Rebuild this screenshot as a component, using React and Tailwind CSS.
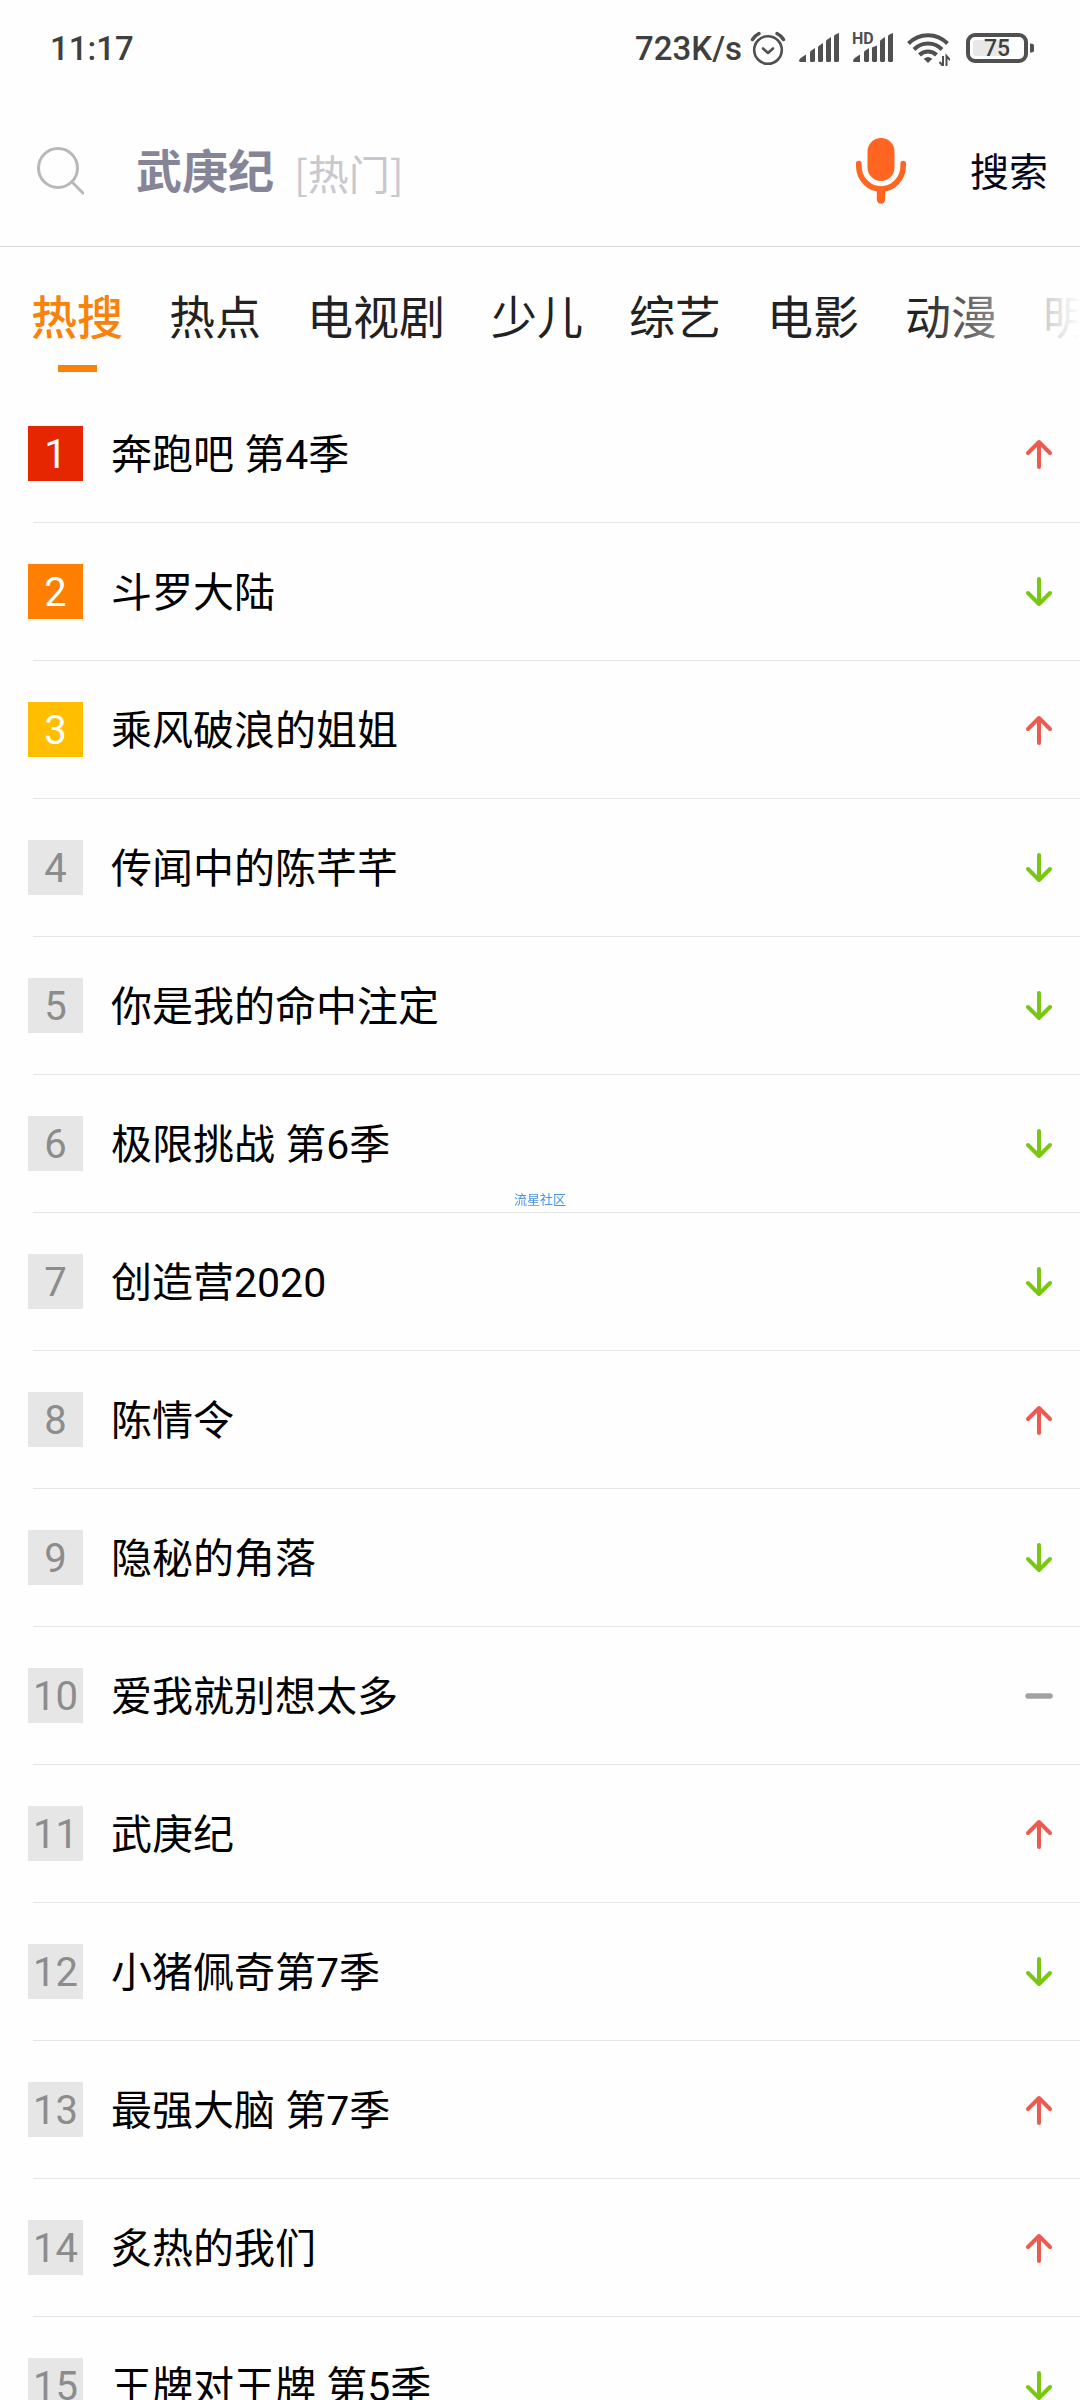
import { useState } from 'react';
import clsx from 'clsx';

const TABS = ['热搜', '热点', '电视剧', '少儿', '综艺', '电影', '动漫', '明星'];

const HOT_LIST = [
  { title: '奔跑吧 第4季', trend: 'up' },
  { title: '斗罗大陆', trend: 'down' },
  { title: '乘风破浪的姐姐', trend: 'up' },
  { title: '传闻中的陈芊芊', trend: 'down' },
  { title: '你是我的命中注定', trend: 'down' },
  { title: '极限挑战 第6季', trend: 'down' },
  { title: '创造营2020', trend: 'down' },
  { title: '陈情令', trend: 'up' },
  { title: '隐秘的角落', trend: 'down' },
  { title: '爱我就别想太多', trend: 'flat' },
  { title: '武庚纪', trend: 'up' },
  { title: '小猪佩奇第7季', trend: 'down' },
  { title: '最强大脑 第7季', trend: 'up' },
  { title: '炙热的我们', trend: 'up' },
  { title: '王牌对王牌 第5季', trend: 'down' },
];

const RANK_COLORS = ['bg-[#e52600] text-white', 'bg-[#ff8000] text-white', 'bg-[#ffbf00] text-white'];

const AlarmIcon = () => (
  <svg className="w-9 h-9" viewBox="0 0 36 36" fill="none" stroke="#505050" strokeLinecap="round" strokeLinejoin="round">
    <circle cx="18" cy="20" r="13.8" strokeWidth="2.6" />
    <path d="M13 18.5l5 4.5 5-4.5" strokeWidth="2.6" />
    <path d="M2.5 9.5Q5 5.500 9 3.500M27 3.500q4 2 6.500 6" strokeWidth="3.4" />
  </svg>
);

const SignalIcon = ({ hd }) => (
  <svg className="w-[42px] h-9 overflow-visible" viewBox="0 0 42 36" fill="#505050">
    <path d="M1 30.500q0-2 7-6V32H2.500Q1 32 1 30.500z" />
    <path d="M12 22.500q0-1 1-1.700l4-2.800v12.500q0 1.500-1.500 1.500h-2Q12 32 12 30.500z" />
    <path d={hd ? 'M20 17.500l5-2v15q0 1.500-1.500 1.500h-2Q20 32 20 30.500z' : 'M20 17.500q0-1 1-1.700l4-2.800v17.500q0 1.500-1.500 1.500h-2Q20 32 20 30.500z'} />
    <path d="M28 11.500q0-1 1-1.700l4-2.800v23.500q0 1.500-1.500 1.500h-2Q28 32 28 30.500z" />
    <path d="M36 6.500q0-1 1-1.700L41 3v27.500q0 1.500-1.500 1.500h-2Q36 32 36 30.500z" />
    {hd && (
      <text x="0" y="14" fontSize="16" fontWeight="700" fontFamily="Roboto, sans-serif">HD</text>
    )}
  </svg>
);

const WifiIcon = () => (
  <svg className="w-11 h-9" viewBox="0 0 44 36" fill="none" stroke="#505050">
    <path d="M2.500 13.500a27 27 0 0 1 39 0" strokeWidth="4" />
    <path d="M8 19.500a19.500 19.500 0 0 1 28 0" strokeWidth="4" />
    <path d="M13.500 25a12 12 0 0 1 17 0" strokeWidth="4" />
    <path d="M22 33l-4.300-4.300q4.300-3.400 8.600 0z" fill="#505050" stroke="none" />
    <path d="M37 26v10l-3.500-4M40.500 36V26l3.500 4" strokeWidth="2" />
  </svg>
);

const BatteryIcon = ({ level }) => (
  <svg className="w-[70px] h-9" viewBox="0 0 70 36">
    <rect x="2" y="5" width="58" height="26" rx="7" fill="none" stroke="#505050" strokeWidth="4" />
    <rect x="7" y="10" width="36" height="16" rx="3" fill="#e8e8e8" />
    <path d="M64 13.500q4 0 4 2v5q0 2-4 2z" fill="#505050" />
    <text x="31" y="26" fontSize="23" fontWeight="500" textAnchor="middle" fill="#3f3f3f" fontFamily="Roboto, sans-serif">
      {level}
    </text>
  </svg>
);

const SearchIcon = () => (
  <svg className="w-12 h-12" viewBox="0 0 48 48" fill="none" stroke="#b8b8b8" strokeWidth="3">
    <circle cx="22" cy="21" r="19.500" />
    <path d="M36 35l12 12" />
  </svg>
);

const MicIcon = () => (
  <svg className="w-[50px] h-[68px]" viewBox="0 0 50 68" fill="none" stroke="#ff6421" strokeLinecap="round">
    <rect x="11.500" y="1" width="27" height="43" rx="13.500" fill="#ff6421" stroke="none" />
    <path d="M2.800 26.500v2.500a22.200 23 0 0 0 44.400 0v-2.500" strokeWidth="5.600" />
    <path d="M25 54v8.500" strokeWidth="8.400" />
  </svg>
);

const TrendIcon = ({ trend }) => (
  <svg className="w-7 h-8" viewBox="0 0 28 32" fill="none" strokeLinecap="round" strokeLinejoin="round">
    {trend === 'up' && <path d="M14 29V4M3 15L14 4l11 11" stroke="#ec5b50" strokeWidth="4" />}
    {trend === 'down' && <path d="M14 3v25M3 17l11 11 11-11" stroke="#78c711" strokeWidth="4" />}
    {trend === 'flat' && <path d="M3 16h22" stroke="#a3a3a3" strokeWidth="5.500" />}
  </svg>
);

const StatusBar = () => (
  <div className="flex items-center justify-between h-24 pl-[50px] pr-11 text-[#3f3f3f] text-[33px] font-medium">
    <span className="pt-0.5">11:17</span>
    <div className="flex items-center">
      <span className="mr-2 pt-0.5">723K/s</span>
      <AlarmIcon />
      <div className="flex items-center gap-3 mx-3 pr-1">
        <SignalIcon />
        <SignalIcon hd />
        <WifiIcon />
      </div>
      <BatteryIcon level={75} />
    </div>
  </div>
);

const SearchBar = () => {
  const [query, setQuery] = useState('');

  return (
    <form
      className="flex items-center h-[151px] pl-9 pr-8 border-b border-[#d8d8d8]"
      onSubmit={(e) => e.preventDefault()}
    >
      <SearchIcon />
      <div className="relative flex-1 h-20 ml-[52px]">
        <input
          id="query"
          className="w-full h-full bg-transparent text-[46px] text-[#222222] focus:outline-none"
          value={query}
          onChange={(e) => setQuery(e.target.value)}
        />
        <label
          htmlFor="query"
          className={clsx('absolute inset-0 flex items-center gap-5 pt-0.5 cursor-text', query && 'invisible')}
        >
          <span className="text-[46px] font-bold text-[#868597]">武庚纪</span>
          <span className="font-['Noto_Sans_CJK_SC',sans-serif] text-[41px] leading-[60px] text-[#c8c8ce]">[热门]</span>
        </label>
      </div>
      <button type="button" aria-label="语音搜索">
        <MicIcon />
      </button>
      <button type="submit" className="ml-16 pt-1 text-[39px] text-[#06061e]">搜索</button>
    </form>
  );
};

const TabBar = ({ active, onChange }) => (
  <div className="relative overflow-hidden">
    <nav className="flex gap-[46px] pl-[31px] pt-9">
      {TABS.map((tab) => (
        <button
          key={tab}
          type="button"
          onClick={() => onChange(tab)}
          className={clsx(
            'flex flex-col items-center shrink-0 h-[102px] gap-3 text-[46px] leading-[70px]',
            tab === active ? 'font-medium text-[#f9820b]' : 'text-[#222222]'
          )}
        >
          {tab}
          {tab === active && <span className="w-[39px] h-[7px] bg-[#f9820b]" />}
        </button>
      ))}
    </nav>
    <div className="absolute inset-y-0 right-0 w-40 bg-linear-to-r from-transparent to-[#fefefe] pointer-events-none" />
  </div>
);

const HotItem = ({ rank, title, trend }) => (
  <li className="flex flex-col shrink-0 h-[138px]">
    <a href="#" className="flex items-center flex-1 pl-7 pr-[27px]">
      <span
        className={clsx(
          'flex items-center justify-center w-[55px] h-[55px] pt-0.5 text-[40px]',
          RANK_COLORS[rank - 1] || 'bg-[#e6e6e6] text-[#8c8c8c]'
        )}
      >
        {rank}
      </span>
      <span className="flex-1 ml-7 pt-1 text-[41px] text-black">{title}</span>
      <TrendIcon trend={trend} />
    </a>
    <div className="h-px ml-[33px] bg-[#e6e6e6]" />
  </li>
);

const App = () => {
  const [activeTab, setActiveTab] = useState(TABS[0]);

  return (
    <div className="flex flex-col h-screen overflow-hidden bg-[#fefefe] font-[Roboto,'Noto_Sans_CJK_SC',sans-serif]">
      <StatusBar />
      <SearchBar />
      <TabBar active={activeTab} onChange={setActiveTab} />
      <ol className="flex flex-col flex-1 overflow-hidden">
        {HOT_LIST.map((item, i) => (
          <HotItem key={item.title} rank={i + 1} title={item.title} trend={item.trend} />
        ))}
      </ol>
      <div className="fixed inset-0 flex items-center justify-center text-[13px] text-[#4a94e6] pointer-events-none">
        流星社区
      </div>
    </div>
  );
};

export default App;
